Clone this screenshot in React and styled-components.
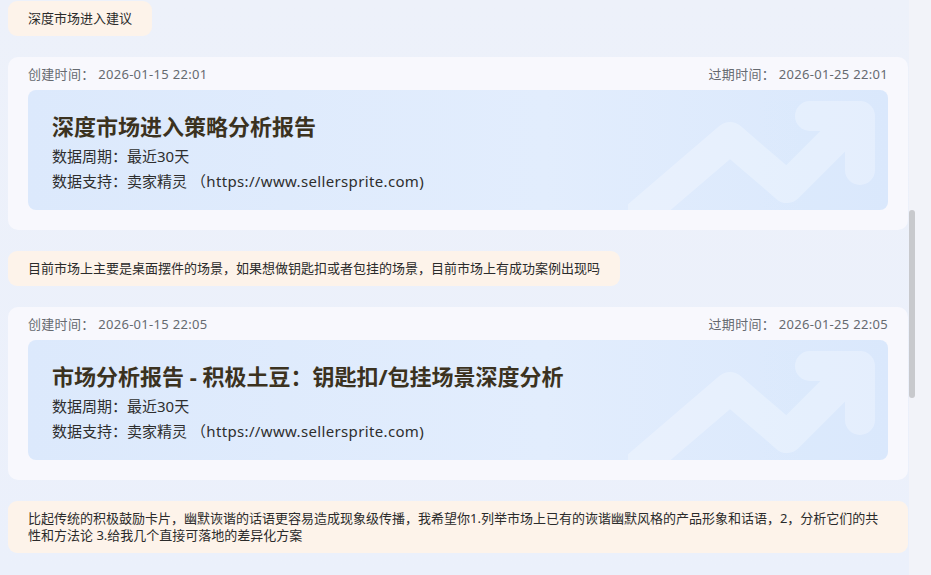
import React from "react";
import styled, { createGlobalStyle } from "styled-components";

const GlobalStyle = createGlobalStyle`
  html, body {
    margin: 0;
    padding: 0;
    height: 100%;
    overflow: hidden;
  }
  body {
    font-family: "Noto Sans", "Noto Sans CJK SC", sans-serif;
    background: #ebf0fa;
  }
`;

const reports = [
  {
    id: 1,
    question: "深度市场进入建议",
    created: "2026-01-15 22:01",
    expires: "2026-01-25 22:01",
    title: "深度市场进入策略分析报告",
  },
  {
    id: 2,
    question:
      "目前市场上主要是桌面摆件的场景，如果想做钥匙扣或者包挂的场景，目前市场上有成功案例出现吗",
    created: "2026-01-15 22:05",
    expires: "2026-01-25 22:05",
    title: "市场分析报告 - 积极土豆：钥匙扣/包挂场景深度分析",
  },
];

const lastQuestion =
  "比起传统的积极鼓励卡片，幽默诙谐的话语更容易造成现象级传播，我希望你1.列举市场上已有的诙谐幽默风格的产品形象和话语，2，分析它们的共性和方法论 3.给我几个直接可落地的差异化方案";

function TrendMark() {
  return (
    <Mark width="260" height="120" viewBox="0 0 260 120" fill="none">
      <path
        d="M4 132 L102 48 L159 97 L226 30"
        stroke="#ffffff"
        strokeWidth="32"
        strokeLinecap="round"
        strokeLinejoin="round"
      />
      <path
        d="M182 26 H232 V80"
        stroke="#ffffff"
        strokeWidth="30"
        strokeLinecap="round"
        strokeLinejoin="round"
      />
    </Mark>
  );
}

function ReportCard({ item }) {
  return (
    <Card>
      <CardHead>
        <span>创建时间： {item.created}</span>
        <span>过期时间： {item.expires}</span>
      </CardHead>
      <Banner>
        <TrendMark />
        <Title>{item.title}</Title>
        <Meta>数据周期：最近30天</Meta>
        <Meta>
          数据支持：卖家精灵 <Url>（https://www.sellersprite.com)</Url>
        </Meta>
      </Banner>
    </Card>
  );
}

export default function App() {
  return (
    <>
      <GlobalStyle />
      <Page>
        <Feed>
          {reports.map((item) => (
            <React.Fragment key={item.id}>
              <Bubble>{item.question}</Bubble>
              <ReportCard item={item} />
            </React.Fragment>
          ))}
          <Bubble>{lastQuestion}</Bubble>
        </Feed>
        <Track>
          <Thumb />
        </Track>
      </Page>
    </>
  );
}

const Page = styled.div`
  display: flex;
  height: 100vh;
  background: linear-gradient(180deg, #edf1fa 0%, #ebf0fb 100%);
`;

const Feed = styled.div`
  flex: 1;
  display: flex;
  flex-direction: column;
  align-items: flex-start;
  gap: 21px;
  padding: 1px 1px 0 8px;
  overflow: hidden;
`;

const Bubble = styled.div`
  background: #fdf3ea;
  border-radius: 9px;
  padding: 9px 20px;
  font-size: 13px;
  line-height: 17px;
  color: #2b2b2b;
  box-sizing: border-box;
  max-width: 100%;
`;

const Card = styled.div`
  align-self: stretch;
  background: #f8f8fd;
  border-radius: 10px;
  padding: 8px 20px 20px;
`;

const CardHead = styled.div`
  display: flex;
  justify-content: space-between;
  font-size: 13px;
  line-height: 18px;
  letter-spacing: 0.3px;
  color: #666a70;
  margin-bottom: 7px;
`;

const Banner = styled.div`
  position: relative;
  overflow: hidden;
  border-radius: 8px;
  padding: 20px 24px 16px;
  background: linear-gradient(90deg, #dce9fc 0%, #e2edfd 60%, #dae8fc 100%);
`;

const Mark = styled.svg`
  position: absolute;
  right: 0;
  bottom: 0;
  opacity: 0.28;
`;

const Title = styled.h2`
  position: relative;
  margin: 0 0 2px;
  font-size: 22px;
  line-height: 32px;
  font-weight: 700;
  color: #3b3220;
`;

const Meta = styled.div`
  position: relative;
  font-size: 15px;
  line-height: 25px;
  color: #2e2e2e;
`;

const Url = styled.span`
  letter-spacing: 0.35px;
`;

const Track = styled.div`
  width: 22px;
  background: #f2f3f9;
  padding-top: 210px;
`;

const Thumb = styled.div`
  width: 6px;
  height: 188px;
  border-radius: 3px;
  background: #c8c9cd;
`;
